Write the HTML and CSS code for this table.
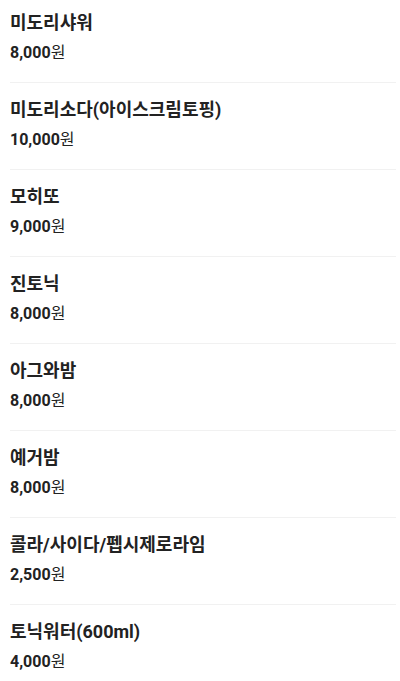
FILE: index.html
```html
<!DOCTYPE html>
<html lang="ko">
<head>
<meta charset="UTF-8" />
<meta name="viewport" content="width=device-width, initial-scale=1" />
<title>메뉴</title>
<link rel="stylesheet" href="styles.css">
</head>
<body>

<ul class="menu-list">
  <li class="menu-item">
    <h3 class="menu-name">미도리샤워</h3>
    <p class="menu-price">8,000<span class="won">원</span></p>
  </li>
  <li class="menu-item">
    <h3 class="menu-name">미도리소다(아이스크림토핑)</h3>
    <p class="menu-price">10,000<span class="won">원</span></p>
  </li>
  <li class="menu-item">
    <h3 class="menu-name">모히또</h3>
    <p class="menu-price">9,000<span class="won">원</span></p>
  </li>
  <li class="menu-item">
    <h3 class="menu-name">진토닉</h3>
    <p class="menu-price">8,000<span class="won">원</span></p>
  </li>
  <li class="menu-item">
    <h3 class="menu-name">아그와밤</h3>
    <p class="menu-price">8,000<span class="won">원</span></p>
  </li>
  <li class="menu-item">
    <h3 class="menu-name">예거밤</h3>
    <p class="menu-price">8,000<span class="won">원</span></p>
  </li>
  <li class="menu-item">
    <h3 class="menu-name">콜라/사이다/펩시제로라임</h3>
    <p class="menu-price">2,500<span class="won">원</span></p>
  </li>
  <li class="menu-item">
    <h3 class="menu-name">토닉워터(600ml)</h3>
    <p class="menu-price">4,000<span class="won">원</span></p>
  </li>
</ul>

</body>
</html>
```

FILE: styles.css
```css
body {
  font-family: Roboto, "Noto Sans CJK KR", sans-serif;
  background: #fff;
  color: #222;
  margin: 0;
  padding: 0;
  overflow: hidden;
}
.menu-list {
  list-style: none;
  margin: -4px 4px 0 10px;
  padding: 0;
}
.menu-item {
  box-sizing: border-box;
  height: 87px;
  padding: 14px 0 0;
  border-bottom: 1px solid #f1f1f1;
}
.menu-name {
  margin: 0;
  font-size: 18px;
  line-height: 26px;
  font-weight: 700;
}
.menu-price {
  margin: 6px 0 0;
  font-size: 16px;
  line-height: 22px;
  font-weight: 700;
}
.won {
  font-weight: 400;
}
```
